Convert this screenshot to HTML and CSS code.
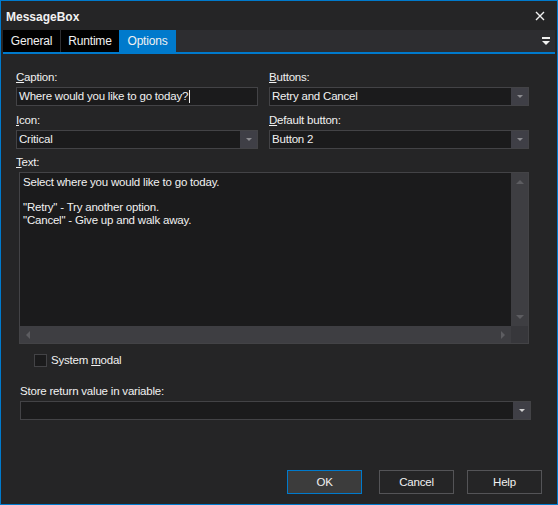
FILE: index.html
```html
<!DOCTYPE html>
<html lang="en">
<head>
    <meta charset="UTF-8">
    <title>MessageBox</title>
    <link rel="stylesheet" href="styles.css">
</head>
<body>
    <div class="window">
        <div class="titlebar">
            <span class="title">MessageBox</span>
            <svg class="close" width="10" height="10" viewBox="0 0 10 10">
                <path d="M1 1 L9 9 M9 1 L1 9" stroke="#f1f1f1" stroke-width="1.4"/>
            </svg>
        </div>

        <div class="tabs">
            <div class="tab general">General</div>
            <div class="tab runtime">Runtime</div>
            <div class="tab active">Options</div>
            <div class="tab-menu">
                <svg width="8" height="9" viewBox="0 0 8 9">
                    <rect x="0" y="0" width="8" height="2" fill="#f1f1f1"/>
                    <path d="M0 4 L8 4 L4 8 Z" fill="#f1f1f1"/>
                </svg>
            </div>
        </div>

        <div class="content">
            <div class="grid">
                <div class="field">
                    <label><u>C</u>aption:</label>
                    <div class="input">Where would you like to go today?<span class="caret"></span></div>
                </div>
                <div class="field">
                    <label><u>B</u>uttons:</label>
                    <div class="input select">
                        <span class="value">Retry and Cancel</span>
                        <span class="drop"><i class="tri"></i></span>
                    </div>
                </div>
                <div class="field">
                    <label><u>I</u>con:</label>
                    <div class="input select">
                        <span class="value">Critical</span>
                        <span class="drop"><i class="tri"></i></span>
                    </div>
                </div>
                <div class="field">
                    <label><u>D</u>efault button:</label>
                    <div class="input select">
                        <span class="value">Button 2</span>
                        <span class="drop"><i class="tri"></i></span>
                    </div>
                </div>
            </div>

            <label class="text-label"><u>T</u>ext:</label>
            <div class="textbox">
                <div class="text">Select where you would like to go today.<br><br>"Retry" - Try another option.<br>"Cancel" - Give up and walk away.</div>
                <div class="vscroll">
                    <i class="arrow up"></i>
                    <i class="arrow down"></i>
                </div>
                <div class="hscroll">
                    <i class="arrow left"></i>
                    <i class="arrow right"></i>
                </div>
                <div class="corner"></div>
            </div>

            <div class="check-row">
                <span class="checkbox"></span>
                <span>System <u>m</u>odal</span>
            </div>

            <label class="store-label">Store return value in variable:</label>
            <div class="input select store">
                <span class="value"></span>
                <span class="drop"><i class="tri light"></i></span>
            </div>
        </div>

        <div class="footer">
            <div class="btn default">OK</div>
            <div class="btn cancel">Cancel</div>
            <div class="btn help">Help</div>
        </div>
    </div>
</body>
</html>
```

FILE: styles.css
```css
body {
    margin: 0;
    background: #252526;
    font-family: "Liberation Sans", Arial, sans-serif;
    font-size: 11.5px;
    letter-spacing: -0.2px;
    color: #f1f1f1;
}
.window {
    width: 558px;
    height: 505px;
    box-sizing: border-box;
    border: 1px solid #007acc;
    background: #252526;
    display: flex;
    flex-direction: column;
}
.titlebar {
    height: 29px;
    display: flex;
    align-items: center;
    justify-content: space-between;
    padding: 0 12px 0 5px;
}
.title {
    font-weight: bold;
    font-size: 12px;
    letter-spacing: 0;
    margin-top: 2px;
}
.close {
    margin-top: 1px;
}
.tabs {
    height: 22px;
    margin: 0 2px 0 2px;
    background: #2d2d30;
    border-bottom: 2px solid #007acc;
    display: flex;
}
.tab {
    background: #000;
    line-height: 22px;
    font-size: 12px;
    text-align: center;
}
.tab.general {
    width: 57px;
    border-right: 1px solid #2d2d30;
}
.tab.runtime {
    width: 58px;
}
.tab.active {
    background: #007acc;
    width: 57px;
}
.tab-menu {
    margin-left: auto;
    padding: 6px 5px 0 0;
}
.content {
    padding: 16px 0 0 15px;
}
.grid {
    display: grid;
    grid-template-columns: 242px 260px;
    column-gap: 11px;
    row-gap: 7px;
}
label {
    display: block;
    line-height: 14px;
    margin-bottom: 3px;
}
.input {
    height: 19px;
    box-sizing: border-box;
    background: #1b1b1c;
    border: 1px solid #434346;
    padding: 0 2px;
    line-height: 17px;
    display: flex;
    align-items: center;
    white-space: nowrap;
}
.caret {
    display: inline-block;
    width: 1px;
    height: 13px;
    background: #f1f1f1;
    margin-left: 1px;
}
.select {
    padding: 0 0 0 2px;
}
.select .value {
    flex: 1;
}
.drop {
    width: 17px;
    height: 17px;
    background: #3f3f46;
    display: flex;
    align-items: center;
    justify-content: center;
}
.tri {
    width: 0;
    height: 0;
    border-left: 3px solid transparent;
    border-right: 3px solid transparent;
    border-top: 3px solid #8c8c90;
}
.tri.light {
    border-top-color: #d0d0d0;
}
.text-label {
    margin-top: 6px;
    margin-bottom: 3px;
}
.textbox {
    margin-left: 3px;
    width: 510px;
    height: 172px;
    box-sizing: border-box;
    border: 1px solid #434346;
    background: #1b1b1c;
    display: grid;
    grid-template-columns: 1fr 17px;
    grid-template-rows: 1fr 17px;
}
.text {
    padding: 3px 3px;
    line-height: 12.5px;
}
.vscroll, .hscroll {
    background: #3e3e42;
    display: flex;
    justify-content: space-between;
    align-items: center;
}
.vscroll {
    flex-direction: column;
    padding: 7px 0;
}
.hscroll {
    padding: 0 6px;
}
.corner {
    background: #37373b;
}
.arrow {
    width: 0;
    height: 0;
}
.arrow.up {
    border-left: 4px solid transparent;
    border-right: 4px solid transparent;
    border-bottom: 4px solid #5d5d61;
}
.arrow.down {
    border-left: 4px solid transparent;
    border-right: 4px solid transparent;
    border-top: 4px solid #5d5d61;
}
.arrow.left {
    border-top: 4px solid transparent;
    border-bottom: 4px solid transparent;
    border-right: 4px solid #5d5d61;
}
.arrow.right {
    border-top: 4px solid transparent;
    border-bottom: 4px solid transparent;
    border-left: 4px solid #5d5d61;
}
.check-row {
    display: flex;
    align-items: center;
    margin: 9px 0 0 18px;
    height: 14px;
}
.checkbox {
    width: 13px;
    height: 13px;
    box-sizing: border-box;
    background: #1b1b1c;
    border: 1px solid #434346;
    margin-right: 4px;
}
.store-label {
    margin: 17px 0 3px 4px;
}
.store {
    margin-left: 4px;
    width: 511px;
}
.footer {
    margin-top: auto;
    display: flex;
    justify-content: flex-end;
    padding: 0 15px 9px 0;
}
.btn {
    width: 75px;
    height: 24px;
    box-sizing: border-box;
    border: 1px solid #545457;
    background: #252526;
    text-align: center;
    line-height: 22px;
}
.btn.default {
    border-color: #007acc;
    background: #3c3c3c;
    margin-bottom: 1px;
}
.btn.cancel {
    margin-left: 17px;
    margin-bottom: 1px;
}
.btn.help {
    margin-left: 13px;
}
```
